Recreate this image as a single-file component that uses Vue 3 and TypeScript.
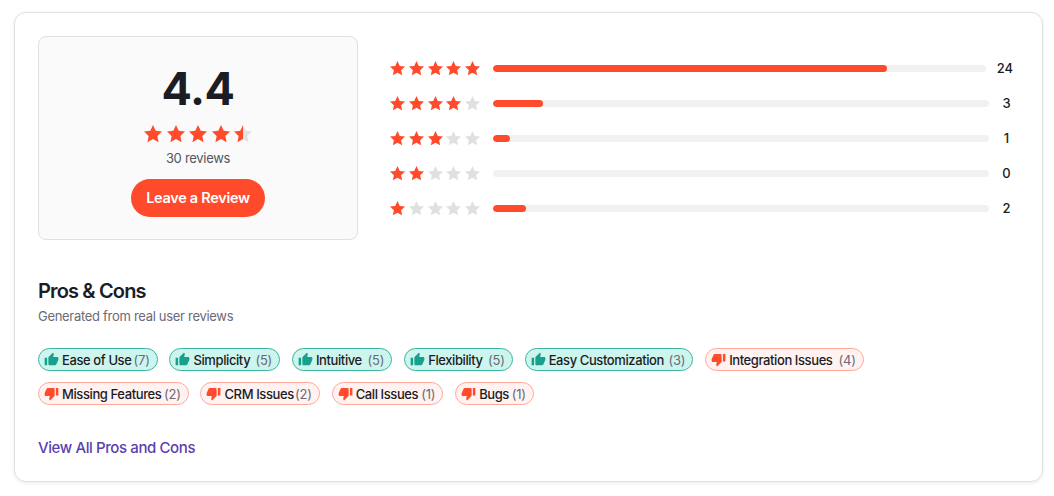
<script setup lang="ts">
interface Chip {
  label: string
  count: number
  good: boolean
  width: number
}

const STAR = 'M12 1.6l3.2 6.9 7.4.9-5.5 5.1 1.5 7.4L12 18.2l-6.6 3.7 1.5-7.4L1.4 9.4l7.4-.9z'
const STAR_BOX = '1.4 1.6 21.2 21.2'
const UP = 'M1 21h4V9H1v12zm22-11c0-1.1-.9-2-2-2h-6.31l.95-4.57.03-.32c0-.41-.17-.79-.44-1.06L14.17 1 7.59 7.59C7.22 7.95 7 8.45 7 9v10c0 1.1.9 2 2 2h9c.83 0 1.54-.5 1.84-1.22l3.02-7.05c.09-.23.14-.47.14-.73v-2z'
const DOWN = 'M15 3H6c-.83 0-1.54.5-1.84 1.22l-3.02 7.05c-.09.23-.14.47-.14.73v2c0 1.1.9 2 2 2h6.31l-.95 4.57-.03.32c0 .41.17.79.44 1.06L9.83 23l6.59-6.59c.36-.36.58-.86.58-1.41V5c0-1.1-.9-2-2-2zm4 0v12h4V3h-4z'

const total = 30
const rows = [
  { stars: 5, count: 24 },
  { stars: 4, count: 3 },
  { stars: 3, count: 1 },
  { stars: 2, count: 0 },
  { stars: 1, count: 2 },
]

// widths keep the chips on the same grid, the label font is slightly off
const chips: Chip[] = [
  { label: 'Ease of Use', count: 7, good: true, width: 119.7 },
  { label: 'Simplicity', count: 5, good: true, width: 110.7 },
  { label: 'Intuitive', count: 5, good: true, width: 100.4 },
  { label: 'Flexibility', count: 5, good: true, width: 108.7 },
  { label: 'Easy Customization', count: 3, good: true, width: 168.7 },
  { label: 'Integration Issues', count: 4, good: false, width: 158.7 },
  { label: 'Missing Features', count: 2, good: false, width: 150.7 },
  { label: 'CRM Issues', count: 2, good: false, width: 119.4 },
  { label: 'Call Issues', count: 1, good: false, width: 111.7 },
  { label: 'Bugs', count: 1, good: false, width: 78.7 },
]
</script>

<template>
  <div class="page">
    <section class="card">
      <div class="top">
        <div class="summary">
          <div class="score">4.4</div>
          <div class="big-stars">
            <svg v-for="n in 4" :key="n" :viewBox="STAR_BOX" class="big-star"><path :d="STAR" fill="#ff4a2b" /></svg>
            <svg :viewBox="STAR_BOX" class="big-star">
              <defs>
                <linearGradient id="half">
                  <stop offset="50%" stop-color="#ff4a2b" />
                  <stop offset="50%" stop-color="#e2e2e4" />
                </linearGradient>
              </defs>
              <path :d="STAR" fill="url(#half)" />
            </svg>
          </div>
          <div class="reviews">30 reviews</div>
          <button class="leave">Leave a Review</button>
        </div>

        <div class="bars">
          <div v-for="row in rows" :key="row.stars" class="bar-row">
            <div class="row-stars">
              <svg v-for="n in 5" :key="n" :viewBox="STAR_BOX" class="row-star">
                <path :d="STAR" :fill="n <= row.stars ? '#ff4a2b' : '#e0e0e2'" />
              </svg>
            </div>
            <div class="track">
              <div class="fill" :style="{ width: (row.count / total) * 100 + '%' }"></div>
            </div>
            <span class="count">{{ row.count }}</span>
          </div>
        </div>
      </div>

      <h2 class="title">Pros &amp; Cons</h2>
      <p class="sub">Generated from real user reviews</p>

      <div class="chips">
        <span
          v-for="chip in chips"
          :key="chip.label"
          class="chip"
          :class="chip.good ? 'good' : 'bad'"
          :style="{ width: chip.width + 'px' }"
        >
          <svg viewBox="0 0 24 24" class="thumb"><path :d="chip.good ? UP : DOWN" /></svg>
          <span class="chip-label">{{ chip.label }}</span>
          <span class="chip-count">({{ chip.count }})</span>
        </span>
      </div>

      <a class="view-all" href="#">View All Pros and Cons</a>
    </section>
  </div>
</template>

<style>
body {
  background: #fff;
}
</style>

<style scoped>
.page {
  padding: 12px 11px 14px 14px;
  font-family: Inter, "Noto Sans", sans-serif;
  color: #1c1c24;
}

.card {
  height: 470px;
  box-sizing: border-box;
  padding: 23px 23px 0;
  background: #fff;
  border: 1px solid #e0e0e0;
  border-radius: 12px;
  box-shadow: 0 1px 4px rgba(0, 0, 0, 0.08);
}

.top {
  display: flex;
  gap: 32px;
}

.summary {
  width: 320px;
  height: 204px;
  box-sizing: border-box;
  flex-shrink: 0;
  display: flex;
  flex-direction: column;
  align-items: center;
  padding-top: 25px;
  background: #fafafa;
  border: 1px solid #e0e0e0;
  border-radius: 8px;
}

.score {
  font-size: 45px;
  font-weight: 700;
  line-height: 54px;
  letter-spacing: -0.5px;
  color: #1c1c24;
}

.big-stars {
  display: flex;
  gap: 4.5px;
  margin-top: 9px;
}

.big-star {
  width: 18px;
  height: 18px;
  display: block;
}

.reviews {
  margin-top: 7px;
  font-size: 13px;
  line-height: 17px;
  letter-spacing: -0.3px;
  color: #55555f;
}

.leave {
  margin-top: 12px;
  width: 134px;
  height: 38px;
  padding: 0 0 2px;
  border: none;
  border-radius: 19px;
  background: #ff4a2b;
  color: #fff;
  font: 600 14.5px Inter, sans-serif;
  letter-spacing: -0.3px;
}

.bars {
  flex: 1;
  display: flex;
  flex-direction: column;
  gap: 13px;
  padding-top: 21px;
  min-width: 0;
}

.bar-row {
  height: 22px;
  display: flex;
  align-items: center;
}

.row-stars {
  display: flex;
  gap: 3.75px;
  width: 90px;
  flex-shrink: 0;
}

.row-star {
  width: 15px;
  height: 15px;
  display: block;
}

.track {
  flex: 1;
  height: 7px;
  margin: 0 11px 0 13px;
  background: #f1f1f1;
  border-radius: 4px;
  overflow: hidden;
}

.fill {
  height: 100%;
  background: #ff4a2b;
  border-radius: 4px;
}

.count {
  min-width: 13px;
  margin-right: 6px;
  text-align: center;
  font-size: 13px;
  font-weight: 500;
  color: #1c1c24;
}

.title {
  margin: 39px 0 0;
  font-size: 20px;
  line-height: 24px;
  font-weight: 600;
  letter-spacing: -0.85px;
  color: #1c1c24;
}

.sub {
  margin: 4px 0 0;
  font-size: 13px;
  line-height: 18px;
  letter-spacing: -0.3px;
  color: #6a6a78;
}

.chips {
  display: flex;
  flex-wrap: wrap;
  gap: 11px 11.8px;
  margin-top: 23px;
  width: 860px;
}

.chip {
  height: 23px;
  box-sizing: border-box;
  display: inline-flex;
  align-items: center;
  padding: 0 7px 0 5px;
  border: 1px solid;
  border-radius: 12px;
  font-size: 13px;
  white-space: nowrap;
}

.good {
  background: #ccf5ee;
  border-color: #3fb3a2;
}

.bad {
  background: #fff2f0;
  border-color: #ffa99b;
}

.thumb {
  width: 15px;
  height: 15px;
  margin-right: 3px;
  flex-shrink: 0;
}

.good .thumb {
  fill: #17a08c;
}

.bad .thumb {
  fill: #ff4a2b;
}

.chip-label {
  font-weight: 500;
  letter-spacing: -0.4px;
  color: #1c1c24;
}

.chip-count {
  margin-left: auto;
  letter-spacing: -0.2px;
  color: #6a6a78;
}

.view-all {
  display: inline-block;
  margin-top: 33px;
  font-size: 15px;
  line-height: 20px;
  font-weight: 500;
  letter-spacing: -0.4px;
  color: #5b40b0;
  text-decoration: none;
}
</style>
